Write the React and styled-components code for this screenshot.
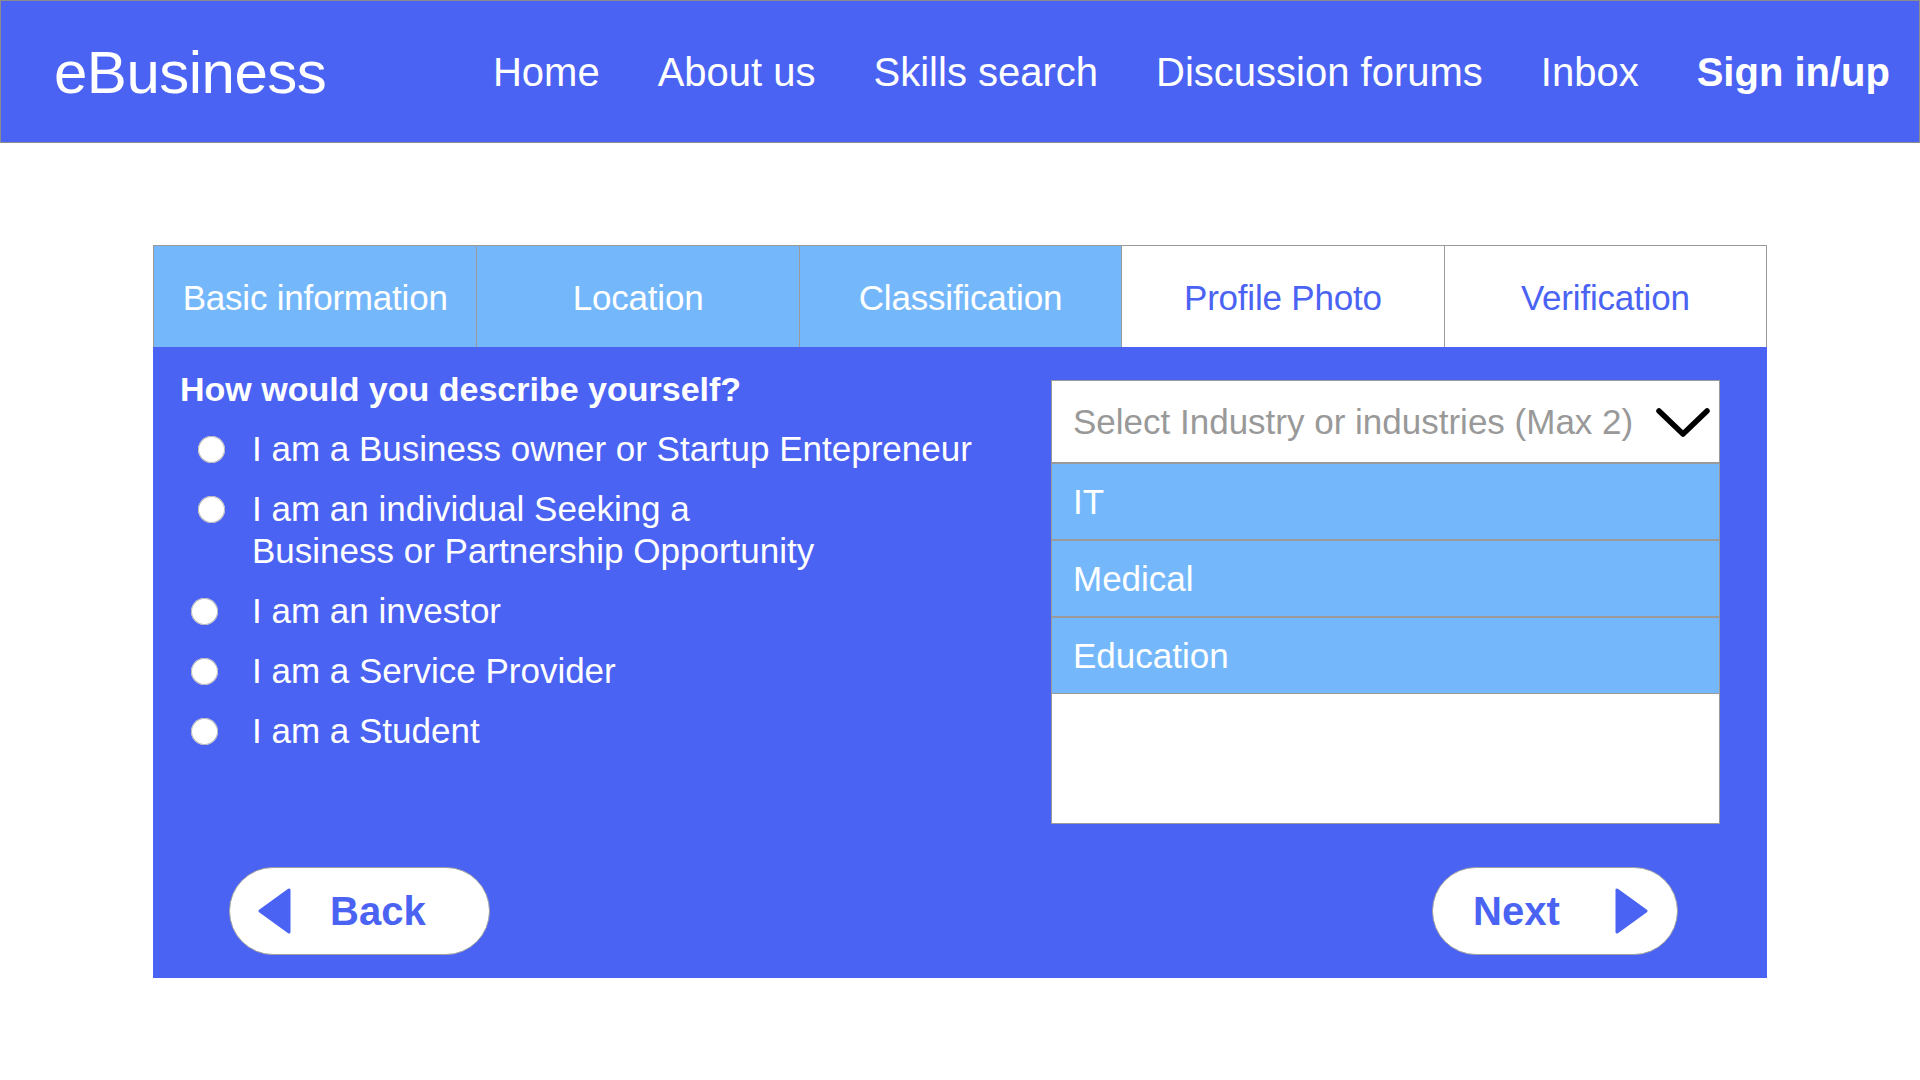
import React from 'react';
import styled, { createGlobalStyle } from 'styled-components';

const BLUE = '#4A63F3';
const LIGHT = '#74B8FB';
const LINE = '#9a9a9a';

const GlobalStyle = createGlobalStyle`
  html, body {
    margin: 0;
    padding: 0;
    background: #fff;
    font-family: "Liberation Sans", Arial, Helvetica, sans-serif;
  }
`;

const Header = styled.header`
  height: 143px;
  box-sizing: border-box;
  background: ${BLUE};
  border: 1px solid #8c8c8c;
  display: flex;
  align-items: center;
  justify-content: space-between;
  padding: 2px 29px 0 53px;
  color: #fff;
`;

const Logo = styled.div`
  font-size: 60px;
  letter-spacing: -0.5px;
  line-height: 1;
`;

const Nav = styled.nav`
  display: flex;
  align-items: center;
  gap: 58px;
  a {
    color: #fff;
    text-decoration: none;
    font-size: 40px;
  }
  a.strong {
    font-weight: bold;
  }
`;

const Wizard = styled.section`
  width: 1614px;
  margin: 102px 0 0 153px;
`;

const Tabs = styled.div`
  display: grid;
  grid-template-columns: repeat(5, 1fr);
  height: 102px;
  box-sizing: border-box;
  border: 1px solid ${LINE};
  border-bottom: none;
`;

const Tab = styled.div`
  display: flex;
  align-items: center;
  justify-content: center;
  padding-top: 2px;
  font-size: 35px;
  letter-spacing: -0.2px;
  background: ${p => (p.$done ? LIGHT : '#fff')};
  color: ${p => (p.$done ? '#fff' : BLUE)};
  border-left: 1px solid ${LINE};
  &:first-child {
    border-left: none;
  }
`;

const Panel = styled.div`
  background: ${BLUE};
  padding: 0 0 23px;
  display: flex;
  flex-direction: column;
`;

const TopRow = styled.div`
  display: flex;
  justify-content: space-between;
  align-items: flex-start;
`;

const Questions = styled.div`
  padding: 21px 0 0 27px;
  display: flex;
  flex-direction: column;
  gap: 18px;
  color: #fff;
`;

const Heading = styled.h2`
  margin: 0;
  font-size: 34px;
  line-height: 42px;
  font-weight: bold;
`;

const Option = styled.label`
  display: grid;
  grid-template-columns: 72px 1fr;
  align-items: start;
  font-size: 35px;
  line-height: 42px;
`;

const Radio = styled.span`
  width: 27px;
  height: 27px;
  margin: 8px 0 0 ${p => p.$inset}px;
  border-radius: 50%;
  background: #fff;
  box-shadow: inset 0 0 0 1px #b8b8b8;
`;

const Select = styled.div`
  width: 669px;
  margin: 33px 47px 0 0;
  box-sizing: border-box;
  background: #fff;
  border: 1px solid ${LINE};
  height: 444px;
  display: flex;
  flex-direction: column;
`;

const SelectHead = styled.div`
  height: 81px;
  display: flex;
  align-items: center;
  justify-content: space-between;
  padding: 0 8px 0 21px;
  color: #999;
  font-size: 35px;
  border-bottom: 2px solid ${LINE};
`;

const Choice = styled.div`
  height: 75px;
  display: flex;
  align-items: center;
  padding-left: 21px;
  background: ${LIGHT};
  color: #fff;
  font-size: 35px;
  border-bottom: ${p => (p.$last ? `1px solid ${LINE}` : `2px solid ${LINE}`)};
`;

const Actions = styled.div`
  display: flex;
  justify-content: space-between;
  padding: 0 89px 0 76px;
  margin-top: 43px;
`;

const PillButton = styled.button`
  height: 88px;
  width: ${p => p.$w}px;
  box-sizing: border-box;
  border-radius: 44px;
  border: 1px solid #a0a0a0;
  background: #fff;
  color: ${BLUE};
  font-family: inherit;
  font-size: 40px;
  font-weight: bold;
  display: flex;
  align-items: center;
  gap: ${p => p.$gap}px;
  padding: ${p => p.$pad};
  cursor: pointer;
`;

const Chevron = () => (
  <svg width="56" height="32" viewBox="0 0 56 32">
    <path d="M4 5 L28 28 L52 5" fill="none" stroke="#000" strokeWidth="5.5" strokeLinecap="round" strokeLinejoin="round" />
  </svg>
);

const Arrow = ({ dir }) => (
  <svg width="34" height="46" viewBox="0 0 34 46">
    {dir === 'left' ? (
      <polygon points="31,2 31,44 2,23" fill={BLUE} stroke={BLUE} strokeWidth="3" strokeLinejoin="round" />
    ) : (
      <polygon points="3,2 3,44 32,23" fill={BLUE} stroke={BLUE} strokeWidth="3" strokeLinejoin="round" />
    )}
  </svg>
);

const tabs = [
  { name: 'Basic information', done: true },
  { name: 'Location', done: true },
  { name: 'Classification', done: true },
  { name: 'Profile Photo', done: false },
  { name: 'Verification', done: false },
];

const options = [
  { inset: 18, text: 'I am a Business owner or Startup Entepreneur' },
  { inset: 18, text: ['I am an individual Seeking a', 'Business or Partnership Opportunity'] },
  { inset: 11, text: 'I am an investor' },
  { inset: 11, text: 'I am a Service Provider' },
  { inset: 11, text: 'I am a Student' },
];

const industries = ['IT', 'Medical', 'Education'];

export default function App() {
  return (
    <>
      <GlobalStyle />
      <Header>
        <Logo>eBusiness</Logo>
        <Nav>
          <a href="#">Home</a>
          <a href="#">About us</a>
          <a href="#">Skills search</a>
          <a href="#">Discussion forums</a>
          <a href="#">Inbox</a>
          <a href="#" className="strong">Sign in/up</a>
        </Nav>
      </Header>

      <Wizard>
        <Tabs>
          {tabs.map(t => (
            <Tab key={t.name} $done={t.done}>{t.name}</Tab>
          ))}
        </Tabs>
        <Panel>
          <TopRow>
            <Questions>
              <Heading>How would you describe yourself?</Heading>
              {options.map((o, i) => (
                <Option key={i}>
                  <Radio $inset={o.inset} />
                  <span>
                    {Array.isArray(o.text)
                      ? o.text.map((line, j) => <div key={j}>{line}</div>)
                      : o.text}
                  </span>
                </Option>
              ))}
            </Questions>
            <Select>
              <SelectHead>
                <span>Select Industry or industries (Max 2)</span>
                <Chevron />
              </SelectHead>
              {industries.map((name, i) => (
                <Choice key={name} $last={i === industries.length - 1}>{name}</Choice>
              ))}
            </Select>
          </TopRow>
          <Actions>
            <PillButton $w={261} $gap={38} $pad="0 0 0 28px">
              <Arrow dir="left" />
              Back
            </PillButton>
            <PillButton $w={246} $gap={54} $pad="0 0 0 40px">
              Next
              <Arrow dir="right" />
            </PillButton>
          </Actions>
        </Panel>
      </Wizard>
    </>
  );
}
